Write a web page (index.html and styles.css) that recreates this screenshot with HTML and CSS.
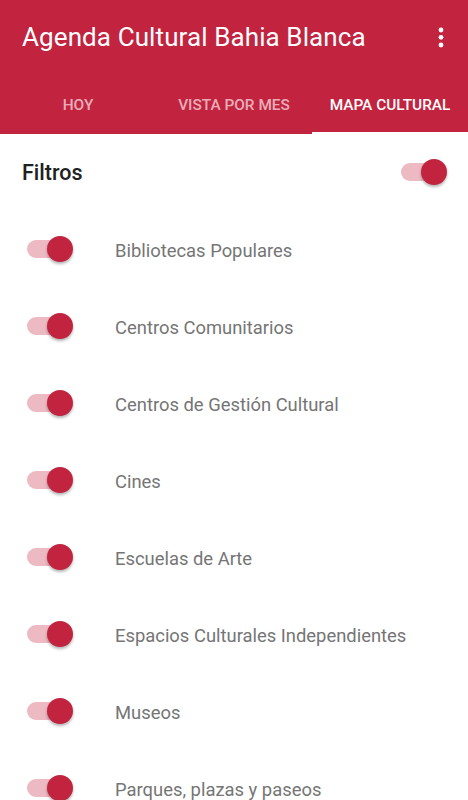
FILE: index.html
```html
<!DOCTYPE html>
<html lang="es">
<head>
  <meta charset="UTF-8" />
  <meta name="viewport" content="width=device-width, initial-scale=1.0" />
  <title>Agenda Cultural Bahia Blanca</title>
  <link rel="stylesheet" href="styles.css">
</head>
<body>

  <div id="app">
    <div class="app-header">
      <div class="toolbar">
        <div class="toolbar-title">Agenda Cultural Bahia Blanca</div>
        <button class="menu-button" aria-label="Más opciones">
          <svg width="8" height="24" viewBox="0 0 8 24">
            <circle cx="4" cy="5" r="2.4" fill="#fff" />
            <circle cx="4" cy="12.3" r="2.4" fill="#fff" />
            <circle cx="4" cy="20" r="2.4" fill="#fff" />
          </svg>
        </button>
      </div>
      <div class="tabs">
        <div class="tab">HOY</div>
        <div class="tab">VISTA POR MES</div>
        <div class="tab active">MAPA CULTURAL</div>
      </div>
    </div>

    <div class="filters-head">
      <div class="filters-title">Filtros</div>
      <span class="switch"></span>
    </div>

    <div class="filter-list">
      <div class="filter-row"><span class="switch"></span><span class="filter-label">Bibliotecas Populares</span></div>
      <div class="filter-row"><span class="switch"></span><span class="filter-label">Centros Comunitarios</span></div>
      <div class="filter-row"><span class="switch"></span><span class="filter-label">Centros de Gestión Cultural</span></div>
      <div class="filter-row"><span class="switch"></span><span class="filter-label">Cines</span></div>
      <div class="filter-row"><span class="switch"></span><span class="filter-label">Escuelas de Arte</span></div>
      <div class="filter-row"><span class="switch"></span><span class="filter-label">Espacios Culturales Independientes</span></div>
      <div class="filter-row"><span class="switch"></span><span class="filter-label">Museos</span></div>
      <div class="filter-row"><span class="switch"></span><span class="filter-label">Parques, plazas y paseos</span></div>
    </div>
  </div>

</body>
</html>
```

FILE: styles.css
```css
body, html {
  margin: 0;
  padding: 0;
  height: 100%;
  width: 100%;
  overflow: hidden;
  background: #fff;
  font-family: Roboto, "Noto Sans", sans-serif;
}
#app {
  display: flex;
  flex-direction: column;
  width: 100%;
}
.app-header {
  background: #c2233f;
  color: #fff;
}
.toolbar {
  height: 74px;
  display: flex;
  align-items: center;
  justify-content: space-between;
  padding: 0 23px 0 22px;
}
.toolbar-title {
  font-size: 26px;
  letter-spacing: 0.1px;
}
.menu-button {
  background: none;
  border: none;
  padding: 0;
  display: flex;
  cursor: pointer;
}
.tabs {
  display: flex;
  height: 60px;
}
.tab {
  flex: 1;
  display: flex;
  align-items: center;
  justify-content: center;
  padding-top: 3px;
  font-size: 15.4px;
  font-weight: 500;
  color: rgba(255, 255, 255, 0.65);
  border-bottom: 2px solid transparent;
  box-sizing: border-box;
}
.tab.active {
  color: #fff;
  border-bottom-color: #fff;
}
.filters-head {
  height: 76px;
  display: flex;
  align-items: center;
  justify-content: space-between;
  padding: 0 21px 0 22px;
}
.filters-title {
  font-size: 21.5px;
  font-weight: 500;
  color: #212121;
}
.filter-row {
  height: 77px;
  display: flex;
  align-items: center;
  padding-left: 27px;
}
.filter-label {
  margin-left: 42px;
  padding-top: 4px;
  font-size: 18.4px;
  color: #757575;
}
.switch {
  position: relative;
  display: block;
  width: 46px;
  height: 26px;
  flex-shrink: 0;
}
.switch::before {
  content: "";
  position: absolute;
  left: 0;
  top: 4px;
  width: 44px;
  height: 18px;
  border-radius: 9px;
  background: #edbac4;
}
.switch::after {
  content: "";
  position: absolute;
  right: 0;
  top: 0;
  width: 26px;
  height: 26px;
  border-radius: 50%;
  background: #c2233f;
  box-shadow: 0 2px 3px rgba(0, 0, 0, 0.3);
}
```
